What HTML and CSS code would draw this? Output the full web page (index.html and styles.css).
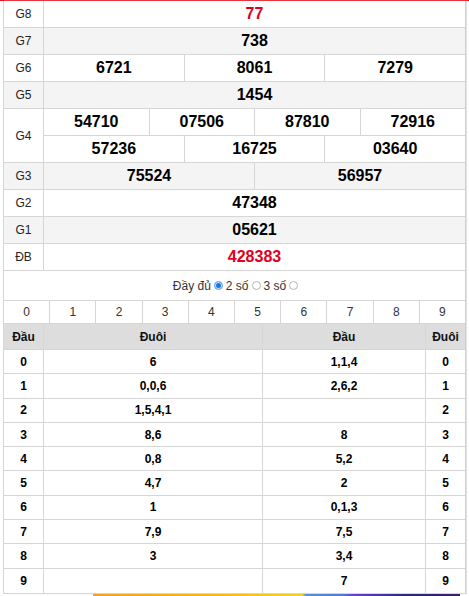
FILE: index.html
```html
<!DOCTYPE html>
<html>
<head>
<meta charset="utf-8">
<link rel="stylesheet" href="styles.css">
</head>
<body>
<div class="topline"></div>
<div class="card">
  <div class="kq">
    <div class="row"><div class="lbl">G8</div><div class="vals"><div class="v red">77</div></div></div>
    <div class="row alt"><div class="lbl">G7</div><div class="vals"><div class="v">738</div></div></div>
    <div class="row"><div class="lbl">G6</div><div class="vals"><div class="v">6721</div><div class="v">8061</div><div class="v">7279</div></div></div>
    <div class="row alt"><div class="lbl">G5</div><div class="vals"><div class="v">1454</div></div></div>
    <div class="row g4"><div class="lbl">G4</div>
      <div class="sub">
        <div class="vals"><div class="v">54710</div><div class="v">07506</div><div class="v">87810</div><div class="v">72916</div></div>
        <div class="vals"><div class="v">57236</div><div class="v">16725</div><div class="v">03640</div></div>
      </div>
    </div>
    <div class="row alt"><div class="lbl">G3</div><div class="vals"><div class="v">75524</div><div class="v">56957</div></div></div>
    <div class="row"><div class="lbl">G2</div><div class="vals"><div class="v">47348</div></div></div>
    <div class="row alt"><div class="lbl">G1</div><div class="vals"><div class="v">05621</div></div></div>
    <div class="row"><div class="lbl">ĐB</div><div class="vals"><div class="v red">428383</div></div></div>
  </div>
  <div class="opts">Đầy đủ <span class="radio on"></span> 2 số <span class="radio"></span> 3 số <span class="radio"></span></div>
  <div class="digits">
    <div>0</div><div>1</div><div>2</div><div>3</div><div>4</div><div>5</div><div>6</div><div>7</div><div>8</div><div>9</div>
  </div>
  <div class="lt">
    <div class="h">Đầu</div><div class="h">Đuôi</div><div class="h">Đầu</div><div class="h">Đuôi</div>
    <div>0</div><div>6</div><div>1,1,4</div><div>0</div>
    <div>1</div><div>0,0,6</div><div>2,6,2</div><div>1</div>
    <div>2</div><div>1,5,4,1</div><div></div><div>2</div>
    <div>3</div><div>8,6</div><div>8</div><div>3</div>
    <div>4</div><div>0,8</div><div>5,2</div><div>4</div>
    <div>5</div><div>4,7</div><div>2</div><div>5</div>
    <div>6</div><div>1</div><div>0,1,3</div><div>6</div>
    <div>7</div><div>7,9</div><div>7,5</div><div>7</div>
    <div>8</div><div>3</div><div>3,4</div><div>8</div>
    <div>9</div><div></div><div>7</div><div>9</div>
  </div>
</div>
<div class="banner"></div>
</body>
</html>
```

FILE: styles.css
```css
html, body {
  margin: 0;
  padding: 0;
  background: #fff;
}
body {
  font-family: "Liberation Sans", Arial, sans-serif;
  color: #000;
  overflow: hidden;
}
.topline {
  height: 1px;
  background: #e8101e;
}
.card {
  margin: 0 3px;
  border-left: 1px solid #d6d6d6;
  border-right: 1px solid #cfcfcf;
  border-bottom: 1px solid #d6d6d6;
  box-shadow: 1px 0 1px #e4e4e4;
}
.kq .row {
  display: flex;
  border-bottom: 1px solid #d6d6d6;
}
.kq .row.alt {
  background: #f4f4f4;
}
.lbl {
  width: 39px;
  flex: none;
  border-right: 1px solid #d6d6d6;
  display: flex;
  align-items: center;
  justify-content: center;
  font-size: 12px;
  color: #222;
}
.vals {
  flex: 1;
  display: flex;
  height: 26px;
}
.sub {
  flex: 1;
  display: flex;
  flex-direction: column;
}
.sub .vals {
  flex: none;
  height: 26px;
}
.sub .vals:first-child {
  border-bottom: 1px solid #d6d6d6;
}
.v {
  flex: 1;
  display: flex;
  align-items: center;
  justify-content: center;
  font-size: 16px;
  font-weight: bold;
  border-right: 1px solid #d6d6d6;
}
.v:last-child {
  border-right: none;
}
.red {
  color: #e0001b;
}
.opts {
  height: 29px;
  display: flex;
  align-items: center;
  justify-content: center;
  gap: 3px;
  font-size: 12px;
  color: #333;
  padding-left: 2px;
}
.radio {
  display: inline-block;
  width: 7px;
  height: 7px;
  border: 1px solid #b5b5b5;
  border-radius: 50%;
  background: #fff;
}
.radio.on {
  border-color: #7fb2ee;
  background: #1a73e8;
  box-shadow: inset 0 0 0 1px #cfe2fb;
}
.digits {
  display: flex;
  border-top: 1px solid #d6d6d6;
  border-bottom: 1px solid #d6d6d6;
}
.digits div {
  flex: 1;
  height: 22px;
  display: flex;
  align-items: center;
  justify-content: center;
  font-size: 12px;
  color: #333;
  border-right: 1px solid #d6d6d6;
}
.digits div:last-child {
  border-right: none;
}
.lt {
  display: grid;
  grid-template-columns: 40px 219px 163px 1fr;
  grid-auto-rows: 24.3px;
  grid-template-rows: 26px;
}
.lt div {
  display: flex;
  align-items: center;
  justify-content: center;
  font-size: 12px;
  font-weight: bold;
  border-right: 1px solid #d6d6d6;
  border-bottom: 1px solid #d6d6d6;
}
.lt div:nth-child(4n) {
  border-right: none;
}
.lt div:nth-last-child(-n+4) {
  border-bottom: none;
}
.lt .h {
  background: #dddddd;
  color: #111;
}
.banner {
  margin-left: 93px;
  width: 367px;
  height: 20px;
  background: linear-gradient(90deg, #f0a020 0%, #f8c010 40%, #f5d22a 57%, #5a8fd8 58%, #4a7ed0 68%, #6a3fd0 71%, #2a2a7a 85%, #3a1e6a 100%);
}
```
